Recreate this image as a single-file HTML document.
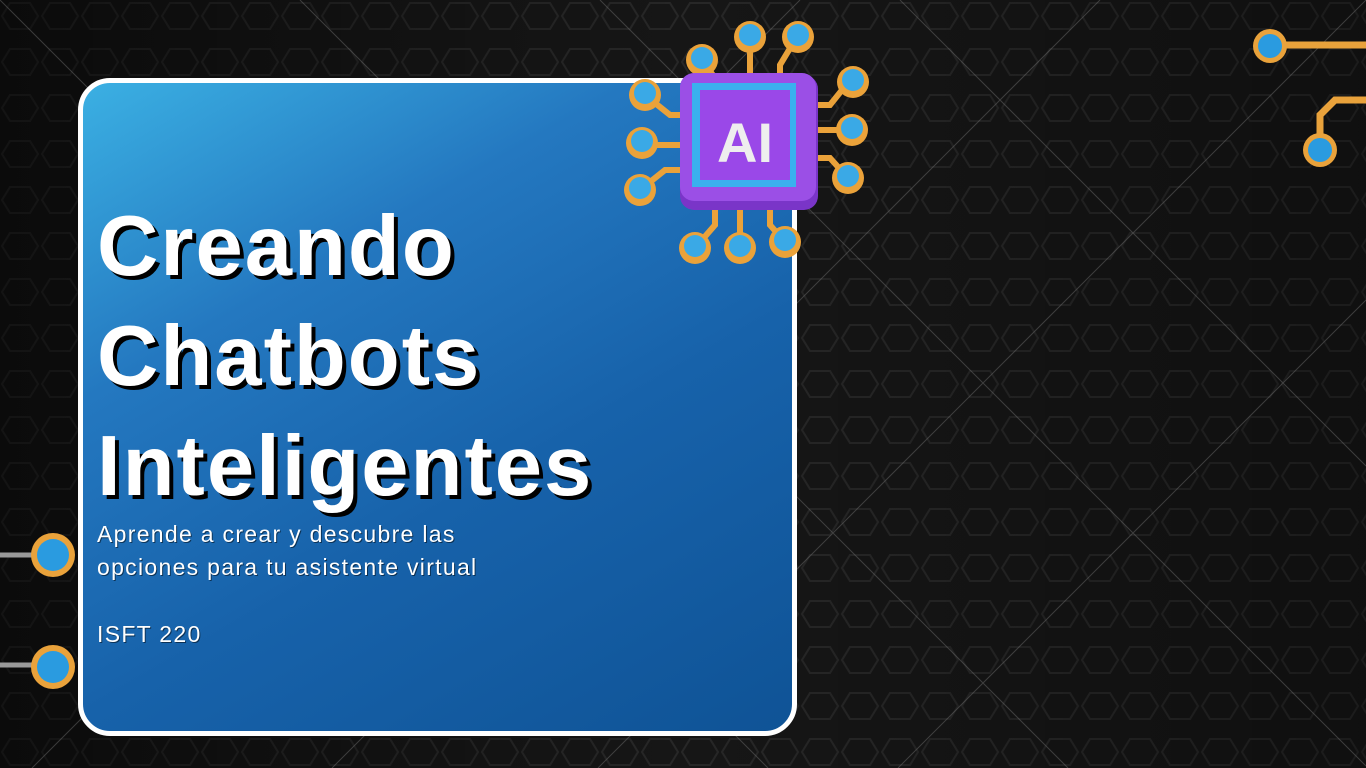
<!DOCTYPE html>
<html><head><meta charset="utf-8"><style>
html,body{margin:0;padding:0;width:1366px;height:768px;overflow:hidden;background:#121212;font-family:"Liberation Sans",sans-serif}
.bg{position:absolute;left:0;top:0}
.card{position:absolute;left:78px;top:78px;width:709px;height:648px;border:5px solid #fff;border-radius:32px;background:linear-gradient(150deg,#3bb0e3 0%,#2478c0 30%,#1762aa 60%,#0f5396 100%);overflow:hidden}
.t{position:absolute;left:97px;color:#fff;font-weight:bold;font-size:85px;letter-spacing:2px;text-shadow:4px 4px 0 #000;line-height:1}
.s{position:absolute;left:97px;color:#fff;font-size:23px;letter-spacing:1.3px;line-height:33px;text-shadow:1px 1px 0 rgba(0,0,0,.5)}
</style></head><body>
<svg class="bg" width="1366" height="768">
<defs>
<pattern id="hx" width="40" height="46" patternUnits="userSpaceOnUse">
<polygon points="10,3 30,3 38,16 30,29 10,29 2,16" fill="none" stroke="#272727" stroke-width="2"/>
</pattern>
<linearGradient id="fade" x1="0" x2="1"><stop offset="0" stop-color="#000" stop-opacity=".5"/><stop offset=".5" stop-color="#000" stop-opacity="0"/><stop offset="1" stop-color="#000" stop-opacity=".3"/></linearGradient>
</defs>
<rect width="1366" height="768" fill="#161616"/>
<rect width="1366" height="768" fill="url(#hx)"/>
<rect width="1366" height="768" fill="url(#fade)"/>
<g stroke="#6a6a6a" stroke-width="1" opacity=".5">
<line x1="0" y1="0" x2="768" y2="768"/><line x1="300" y1="0" x2="1068" y2="768"/><line x1="600" y1="0" x2="1366" y2="766"/><line x1="900" y1="0" x2="1366" y2="466"/>
<line x1="1366" y1="0" x2="598" y2="768"/><line x1="1100" y1="0" x2="332" y2="768"/><line x1="800" y1="0" x2="32" y2="768"/><line x1="1366" y1="300" x2="898" y2="768"/>
</g>
<g stroke="#999" stroke-width="5"><line x1="0" y1="555" x2="50" y2="555"/><line x1="0" y1="665" x2="50" y2="665"/></g>
<g fill="#e9a23b"><circle cx="53" cy="555" r="22"/><circle cx="53" cy="667" r="22"/></g>
<g fill="#2a9be0"><circle cx="53" cy="555" r="16"/><circle cx="53" cy="667" r="16"/></g>
<g stroke="#e9a23b" stroke-width="7" fill="none"><path d="M1285 45H1366"/><path d="M1320 150V115L1335 100H1366"/></g>
<g fill="#e9a23b"><circle cx="1270" cy="46" r="17"/><circle cx="1320" cy="150" r="17"/></g>
<g fill="#2a9be0"><circle cx="1270" cy="46" r="12"/><circle cx="1320" cy="150" r="12"/></g>
</svg>
<div class="card"></div>
<div class="t" style="top:204px">Creando</div>
<div class="t" style="top:314px">Chatbots</div>
<div class="t" style="top:424px">Inteligentes</div>
<div class="s" style="top:518px">Aprende a crear y descubre las<br>opciones para tu asistente virtual</div>
<div class="s" style="top:618px">ISFT 220</div>
<svg style="position:absolute;left:620px;top:20px" width="260" height="250">
<g stroke="#eaa23a" stroke-width="6" fill="none" stroke-linecap="round">
<path d="M82 40L100 65V150"/><path d="M130 20V150"/><path d="M175 20L160 45V150"/>
<path d="M25 75L50 95H80"/><path d="M22 125H80"/><path d="M20 170L45 150H80"/>
<path d="M230 60L210 85H180"/><path d="M230 110H180"/><path d="M228 158L210 138H180"/>
<path d="M75 228L95 205V180"/><path d="M120 228V180"/><path d="M165 222L150 205V180"/>
</g>
<g fill="#eaa23a">
<circle cx="82" cy="40" r="16"/><circle cx="130" cy="17" r="16"/><circle cx="178" cy="17" r="16"/>
<circle cx="25" cy="75" r="16"/><circle cx="22" cy="123" r="16"/><circle cx="20" cy="170" r="16"/>
<circle cx="233" cy="62" r="16"/><circle cx="232" cy="110" r="16"/><circle cx="228" cy="158" r="16"/>
<circle cx="75" cy="228" r="16"/><circle cx="120" cy="228" r="16"/><circle cx="165" cy="222" r="16"/>
</g>
<g fill="#3aa9e6">
<circle cx="82" cy="38" r="11"/><circle cx="130" cy="15" r="11"/><circle cx="178" cy="15" r="11"/>
<circle cx="25" cy="73" r="11"/><circle cx="22" cy="121" r="11"/><circle cx="20" cy="168" r="11"/>
<circle cx="233" cy="60" r="11"/><circle cx="232" cy="108" r="11"/><circle cx="228" cy="156" r="11"/>
<circle cx="75" cy="226" r="11"/><circle cx="120" cy="226" r="11"/><circle cx="165" cy="220" r="11"/>
</g>
<rect x="60" y="55" width="138" height="135" rx="14" fill="#7a35c8"/>
<rect x="60" y="53" width="136" height="128" rx="14" fill="#9b4fe6"/>
<rect x="72" y="63" width="104" height="104" fill="#3ab0ee"/>
<rect x="80" y="70" width="90" height="90" fill="#9a48e8"/>
<text x="125" y="142" text-anchor="middle" font-family="Liberation Sans" font-weight="bold" font-size="56" fill="#eee">AI</text>
</svg>
</body></html>
